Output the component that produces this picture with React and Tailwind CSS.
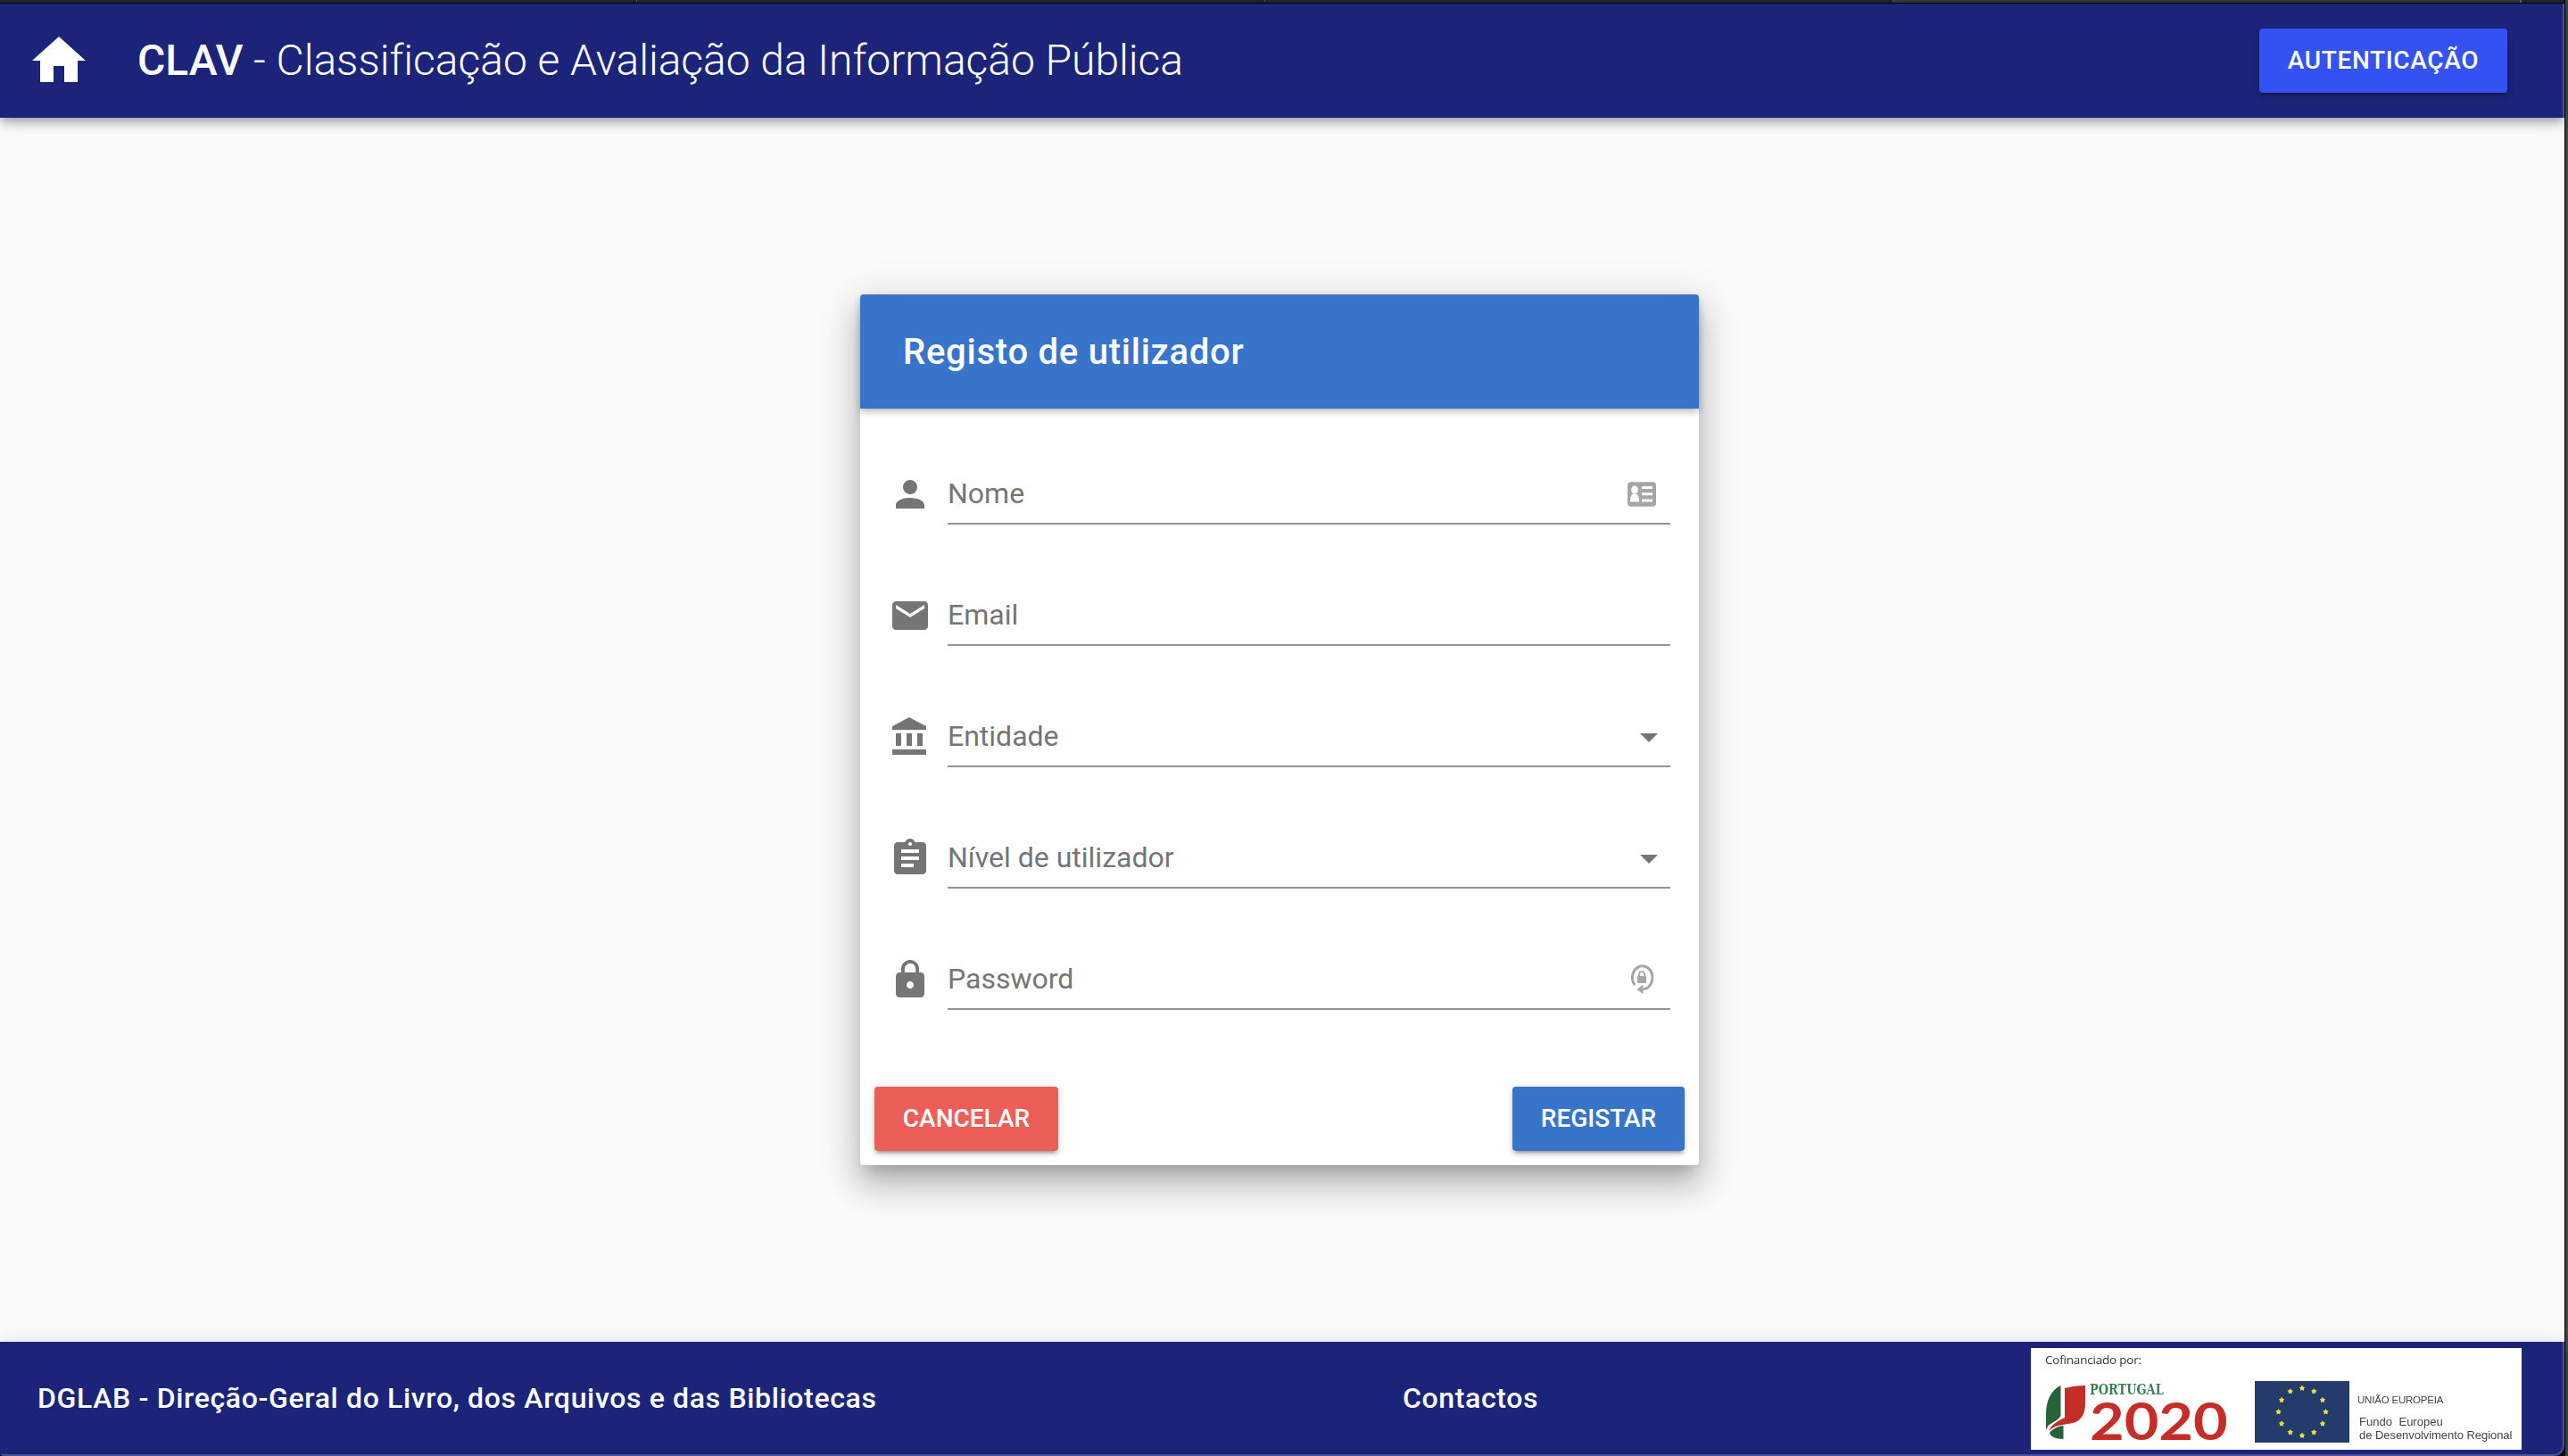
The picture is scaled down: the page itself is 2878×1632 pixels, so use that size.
import React from "react";

const PATHS = {
  home: "M10,20V14H14V20H19V12H22L12,3L2,12H5V20H10Z",
  person:
    "M12,4A4,4 0 0,1 16,8A4,4 0 0,1 12,12A4,4 0 0,1 8,8A4,4 0 0,1 12,4M12,14C16.42,14 20,15.79 20,18V20H4V18C4,15.79 7.58,14 12,14Z",
  email:
    "M20 4H4c-1.1 0-1.99.9-1.99 2L2 18c0 1.1.9 2 2 2h16c1.1 0 2-.9 2-2V6c0-1.1-.9-2-2-2zm0 4l-8 5-8-5V6l8 5 8-5v2z",
  bank: "M4 10v7h3v-7H4zm6 0v7h3v-7h-3zM2 22h19v-3H2v3zm14-12v7h3v-7h-3zm-4.5-9L2 6v2h19V6l-9.5-5z",
  assignment:
    "M19 3h-4.18C14.4 1.84 13.3 1 12 1c-1.3 0-2.4.84-2.82 2H5c-1.1 0-2 .9-2 2v14c0 1.1.9 2 2 2h14c1.1 0 2-.9 2-2V5c0-1.1-.9-2-2-2zm-7 0c.55 0 1 .45 1 1s-.45 1-1 1-1-.45-1-1 .45-1 1-1zm2 14H7v-2h7v2zm3-4H7v-2h10v2zm0-4H7V7h10v2z",
  lock: "M18 8h-1V6c0-2.76-2.24-5-5-5S7 3.24 7 6v2H6c-1.1 0-2 .9-2 2v10c0 1.1.9 2 2 2h12c1.1 0 2-.9 2-2V10c0-1.1-.9-2-2-2zm-6 9c-1.1 0-2-.9-2-2s.9-2 2-2 2 .9 2 2-.9 2-2 2zm3.1-9H8.9V6c0-1.71 1.39-3.1 3.1-3.1 1.71 0 3.1 1.39 3.1 3.1v2z",
  menuDown: "M7,10L12,15L17,10H7Z",
};

function Icon({ name, className }) {
  return (
    <svg viewBox="0 0 24 24" fill="currentColor" className={className}>
      <path d={PATHS[name]} />
    </svg>
  );
}

function ContactCardIcon() {
  return (
    <svg viewBox="0 0 32 28" className="mr-4 h-7 w-8">
      <rect x="0" y="0.3" width="32" height="27.4" rx="4" fill="#a6a6a6" />
      <ellipse cx="8" cy="9" rx="3.9" ry="4.6" fill="#fff" />
      <path d="M2.8 22.5c0-5 1.4-8 3.4-9h3.6c2 1 3.4 4 3.4 9z" fill="#fff" />
      <path d="M16 6.5h12M16 13.8h12M16 21h12" stroke="#fff" strokeWidth="3" />
    </svg>
  );
}

function PasswordCycleIcon() {
  return (
    <svg viewBox="0 0 26 34" className="mr-[19px] h-[34px] w-[26px]">
      <path d="M5 23.2A11.3 13 0 1 1 14.5 27.8" fill="none" stroke="#a6a6a6" strokeWidth="3" />
      <path d="M7.5 28l7-5.2v10.4z" fill="#a6a6a6" />
      <rect x="8" y="13" width="10" height="8" rx="0.8" fill="#a6a6a6" />
      <path d="M10 13.5v-2.300a3 3 0 0 1 6 0v2.300" fill="none" stroke="#a6a6a6" strokeWidth="1.800" />
    </svg>
  );
}

function Field({ icon, label, children }) {
  return (
    <div className="flex h-[136px] items-start">
      <Icon name={icon} className="mt-[14px] mr-[18px] size-12 text-[#757575]" />
      <div className="flex h-[72px] flex-1 items-center justify-between border-b-2 border-[#949494] pt-[6px]">
        <span className="pb-[3px] text-[32px] leading-10 text-[#757575]">{label}</span>
        {children}
      </div>
    </div>
  );
}

function Button({ className, children }) {
  return (
    <button
      className={
        "flex h-[72px] items-center justify-center rounded text-[28px] font-medium text-white shadow-[0_6px_2px_-4px_rgba(0,0,0,.2),0_4px_4px_0_rgba(0,0,0,.14),0_2px_10px_0_rgba(0,0,0,.12)] " +
        className
      }
    >
      {children}
    </button>
  );
}

const STARS = Array.from({ length: 12 }, (_, i) => {
  const a = (i * Math.PI) / 6;
  return [53 + 26.5 * Math.sin(a), 34.5 - 26.5 * Math.cos(a)];
});

function starPoints(cx, cy) {
  return Array.from({ length: 10 }, (_, i) => {
    const r = i % 2 ? 2 : 3.4;
    const a = (i * Math.PI) / 5;
    return `${cx + r * Math.sin(a)},${cy - r * Math.cos(a)}`;
  }).join(" ");
}

function FundingBanner() {
  return (
    <div className="flex h-[114px] w-[550px] flex-col bg-white pl-4">
      <div className="h-[37px] pt-[3px] font-['Open_Sans',sans-serif] text-[13.5px] leading-[20px] tracking-[-0.2px] text-[#333] blur-[0.7px]">
        Cofinanciado por:
      </div>
      <div className="flex">
        <svg viewBox="0 0 46 62" className="mt-[4px] h-[62px] w-[46px] blur-[0.6px]">
          <path d="M17.500 1C6 6 1 19 1 33v18l2.500-5C8 42 14 41 17.500 35z" fill="#27633a" />
          <path d="M22 4C29 2 38 1 45 1v20c0 12-5 20-14 22-10 2-20 2-27 9 3-7 9-11 18-15z" fill="#c52d27" />
          <path d="M20.500 46v15C11 61 6 58 5 54c3-4 8-7 15.500-8z" fill="#27633a" />
        </svg>
        <div className="ml-[4px] flex w-[160px] flex-col items-start blur-[0.6px]">
          <span className="h-[20px] origin-left scale-x-[0.81] font-['DejaVu_Serif',serif] text-[16px] leading-[20px] font-bold whitespace-nowrap text-[#3d7d56]">
            PORTUGAL
          </span>
          <span className="h-[46px] origin-left scale-x-[1.15] font-['Lato',sans-serif] text-[58px] leading-[48px] font-bold whitespace-nowrap text-[#c52d27]">
            2020
          </span>
        </div>
        <svg viewBox="0 0 106 69" className="ml-[25px] h-[69px] w-[106px] blur-[0.6px]">
          <rect width="106" height="69" fill="#243b6c" />
          {STARS.map(([x, y]) => (
            <polygon key={`${x}-${y}`} points={starPoints(x, y)} fill="#e8e03c" />
          ))}
        </svg>
        <div className="ml-[9px] flex flex-col font-['Liberation_Sans',sans-serif] whitespace-nowrap text-[#444] blur-[0.7px]">
          <span className="mt-[14px] text-[11.500px] leading-[14px] tracking-[-0.2px]">UNIÃO EUROPEIA</span>
          <span className="mt-[10px] ml-[2px] text-[13px] leading-[15px] [word-spacing:4px]">Fundo Europeu</span>
          <span className="ml-[2px] text-[13px] leading-[16px] tracking-[-0.05px]">de Desenvolvimento Regional</span>
        </div>
      </div>
    </div>
  );
}

export default function App() {
  return (
    <div className="flex h-[1632px] w-[2878px] overflow-hidden bg-[#444] font-['Roboto',sans-serif]">
      <div className="flex w-[2875px] flex-col border-r border-black bg-[#fafafa]">
        <div className="flex h-1 shrink-0 border-b border-black bg-[#252528]">
          <div className="h-[2px] w-[714px] border-r border-[#55555a]" />
          <div className="h-[2px] w-[704px] border-r border-[#55555a]" />
          <div className="h-[2px] w-[704px] border-r border-[#55555a]" />
          <div className="h-[3px] w-[704px] border-r-2 border-[#606064] bg-[#37373a]" />
        </div>
        <header className="z-10 flex h-32 shrink-0 items-center border-r-2 border-[#4c5196] bg-[#1b2479] pr-[62px] pl-[30px] text-white shadow-[0_4px_8px_-2px_rgba(0,0,0,.2),0_8px_10px_0_rgba(0,0,0,.14),0_2px_20px_0_rgba(0,0,0,.12)]">
          <Icon name="home" className="size-[72px]" />
          <h1 className="ml-[52px] flex-1 text-[48px] leading-[64px] font-light tracking-[-0.03px]">
            <b className="font-medium">CLAV</b> - Classificação e Avaliação da Informação Pública
          </h1>
          <Button className="w-[278px] bg-[#3451f2] tracking-[0.65px]">AUTENTICAÇÃO</Button>
        </header>

        <main className="flex flex-1 justify-center pt-[198px] pr-[6px]">
          <section className="flex h-[976px] w-[940px] flex-col rounded bg-white shadow-[0_14px_16px_-8px_rgba(0,0,0,.2),0_24px_34px_4px_rgba(0,0,0,.14),0_10px_44px_8px_rgba(0,0,0,.12)]">
            <div className="flex h-32 items-center rounded-t bg-[#3875ca] px-12 pt-[2px] text-[40px] font-medium tracking-[0.75px] text-white shadow-[0_4px_8px_-2px_rgba(0,0,0,.2),0_4px_8px_0_rgba(0,0,0,.14)]">
              Registo de utilizador
            </div>
            <form className="flex flex-col px-8 pt-[58px]">
              <Field icon="person" label="Nome">
                <ContactCardIcon />
              </Field>
              <Field icon="email" label="Email" />
              <Field icon="bank" label="Entidade">
                <Icon name="menuDown" className="size-12 text-[#757575]" />
              </Field>
              <Field icon="assignment" label="Nível de utilizador">
                <Icon name="menuDown" className="size-12 text-[#757575]" />
              </Field>
              <Field icon="lock" label="Password">
                <PasswordCycleIcon />
              </Field>
            </form>
            <div className="mt-auto flex justify-between p-4">
              <Button className="w-[206px] bg-[#ec5f59]">CANCELAR</Button>
              <Button className="w-[193px] bg-[#3875ca]">REGISTAR</Button>
            </div>
          </section>
        </main>

        <div className="h-32 shrink-0 bg-black shadow-[0_4px_8px_-2px_rgba(0,0,0,.2),0_8px_10px_0_rgba(0,0,0,.14),0_2px_20px_0_rgba(0,0,0,.12)]">
          <footer className="flex h-32 items-start rounded-br-[12px] rounded-bl-[4px] border-r-2 border-b-2 border-[#4c5196] bg-[#1b2479] pr-[46px] pl-[42px] text-[32px] font-medium tracking-[0.65px] text-white">
            <span className="w-[1530px] leading-[126px]">
              DGLAB - Direção-Geral do Livro, dos Arquivos e das Bibliotecas
            </span>
            <span className="flex-1 leading-[126px]">Contactos</span>
            <div className="mt-[7px] tracking-normal">
              <FundingBanner />
            </div>
          </footer>
        </div>
      </div>
    </div>
  );
}
